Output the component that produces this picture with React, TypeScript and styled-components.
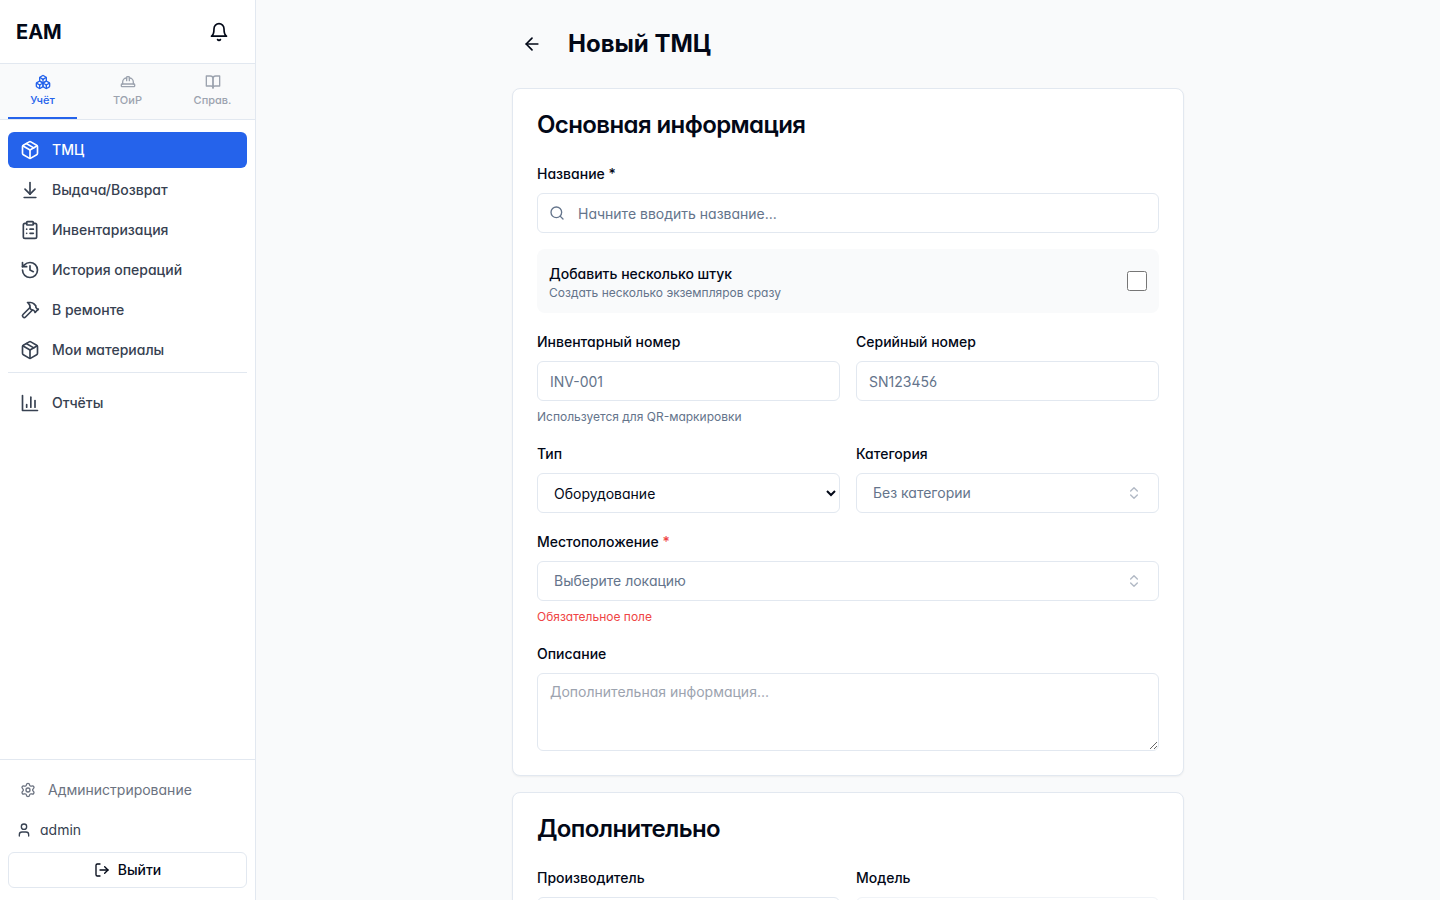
import React, { useState } from 'react';
import styled, { createGlobalStyle } from 'styled-components';
import {
  ArrowDownToLine,
  ArrowLeft,
  Boxes,
  ChevronsUpDown,
  ClipboardList,
  HardHat,
  History,
  LogOut,
  Package,
  Search,
  Settings,
  User,
} from 'lucide-react';

const color = {
  text: '#020817',
  muted: '#64748b',
  border: '#e2e8f0',
  page: '#f9fafb',
  surface: '#ffffff',
  nav: '#374151',
  navMuted: '#6b7280',
  tab: '#9ca3af',
  primary: '#2563eb',
  danger: '#ef4444',
};

const GlobalStyle = createGlobalStyle`
  *, *::before, *::after { box-sizing: border-box; }
  body {
    margin: 0;
    font-family: Inter, "Noto Sans", sans-serif;
    font-feature-settings: "cv02", "cv03", "cv04", "cv11";
    font-size: 16px;
    line-height: 24px;
    color: ${color.text};
    background: ${color.page};
  }
  button, input, select, textarea {
    font: inherit;
    font-feature-settings: inherit;
    color: inherit;
    margin: 0;
  }
  h1, h2, p { margin: 0; }
`;

type IconProps = { size?: number };

const StrokeIcon = ({ size = 20, children }: IconProps & { children: React.ReactNode }) => (
  <svg
    width={size}
    height={size}
    viewBox="0 0 24 24"
    fill="none"
    stroke="currentColor"
    strokeWidth="2"
    strokeLinecap="round"
    strokeLinejoin="round"
    aria-hidden="true"
  >
    {children}
  </svg>
);

const BellIcon = (p: IconProps) => (
  <StrokeIcon {...p}>
    <path d="M6 8a6 6 0 0 1 12 0c0 7 3 9 3 9H3s3-2 3-9" />
    <path d="M10.3 21a1.94 1.94 0 0 0 3.4 0" />
  </StrokeIcon>
);

const BookIcon = (p: IconProps) => (
  <StrokeIcon {...p}>
    <path d="M2 3h6a4 4 0 0 1 4 4v14a3 3 0 0 0-3-3H2z" />
    <path d="M22 3h-6a4 4 0 0 0-4 4v14a3 3 0 0 1 3-3h7z" />
  </StrokeIcon>
);

const HammerIcon = (p: IconProps) => (
  <StrokeIcon {...p}>
    <path d="m15 12-8.373 8.373a1 1 0 1 1-3-3L12 9" />
    <path d="m18 15 4-4" />
    <path d="m21.5 11.5-1.914-1.914A2 2 0 0 1 19 8.172V7l-2.26-2.26a6 6 0 0 0-4.202-1.756L9 2.96l.92.82A6.18 6.18 0 0 1 12 8.4V10l2 2h1.172a2 2 0 0 1 1.414.586L18.5 14.5" />
  </StrokeIcon>
);

const ChartIcon = (p: IconProps) => (
  <StrokeIcon {...p}>
    <path d="M3 3v18h18" />
    <path d="M18 17V9" />
    <path d="M13 17V5" />
    <path d="M8 17v-3" />
  </StrokeIcon>
);

const Layout = styled.div`
  display: flex;
  height: 100vh;
`;

const Sidebar = styled.aside`
  display: flex;
  flex-direction: column;
  flex: 0 0 256px;
  background: ${color.surface};
  border-right: 1px solid ${color.border};
`;

const Brand = styled.div`
  display: flex;
  align-items: center;
  justify-content: space-between;
  height: 64px;
  padding: 0 16px;
  border-bottom: 1px solid ${color.border};
`;

const BrandName = styled.span`
  font-size: 20px;
  line-height: 28px;
  font-weight: 700;
`;

const IconButton = styled.button`
  display: inline-flex;
  align-items: center;
  justify-content: center;
  width: 40px;
  height: 40px;
  padding: 0;
  border: 0;
  border-radius: 6px;
  background: transparent;
  cursor: pointer;
`;

const Tabs = styled.div`
  display: flex;
  height: 56px;
  background: ${color.page};
  border-bottom: 1px solid ${color.border};
`;

const Tab = styled.button<{ $active?: boolean }>`
  position: relative;
  flex: 1;
  display: flex;
  flex-direction: column;
  align-items: center;
  gap: 2px;
  padding: 10px 4px;
  border: 0;
  background: transparent;
  color: ${(p) => (p.$active ? color.primary : color.tab)};
  font-size: 11px;
  line-height: 16px;
  font-weight: 500;
  cursor: pointer;

  &::after {
    content: '';
    position: absolute;
    left: 8px;
    right: 8px;
    bottom: 0;
    height: 2px;
    background: ${(p) => (p.$active ? color.primary : 'transparent')};
  }
`;

const Nav = styled.nav`
  display: flex;
  flex-direction: column;
  flex: 1;
  gap: 4px;
  padding: 12px 8px;
`;

const NavLink = styled.a<{ $active?: boolean; $quiet?: boolean }>`
  display: flex;
  align-items: center;
  gap: 12px;
  padding: 8px 12px;
  border-radius: 6px;
  font-size: 14px;
  line-height: 20px;
  font-weight: ${(p) => (p.$quiet ? 400 : 500)};
  text-decoration: none;
  color: ${(p) => (p.$active ? '#ffffff' : p.$quiet ? color.navMuted : color.nav)};
  background: ${(p) => (p.$active ? color.primary : 'transparent')};
`;

const NavGroup = styled.div`
  padding-top: 12px;
  border-top: 1px solid ${color.border};
`;

const SidebarFooter = styled.div`
  display: flex;
  flex-direction: column;
  gap: 4px;
  padding: 12px 8px;
  border-top: 1px solid ${color.border};
`;

const Account = styled.div`
  display: flex;
  align-items: center;
  gap: 8px;
  padding: 8px;
  font-size: 14px;
  line-height: 20px;
  color: ${color.nav};
`;

const LogoutButton = styled.button`
  display: flex;
  align-items: center;
  justify-content: center;
  gap: 8px;
  height: 36px;
  border: 1px solid ${color.border};
  border-radius: 6px;
  background: ${color.surface};
  font-size: 14px;
  line-height: 20px;
  font-weight: 500;
  cursor: pointer;
`;

const Main = styled.main`
  flex: 1;
  min-width: 0;
  padding: 24px;
  overflow-y: auto;
  scrollbar-width: none;
`;

const Content = styled.div`
  max-width: 672px;
  margin: 0 auto;
`;

const PageHeader = styled.header`
  display: flex;
  align-items: center;
  gap: 16px;
  margin-bottom: 24px;
`;

const PageTitle = styled.h1`
  font-size: 24px;
  line-height: 32px;
  font-weight: 700;
`;

const Form = styled.form`
  display: flex;
  flex-direction: column;
  gap: 16px;
`;

const Card = styled.section`
  padding: 24px;
  background: ${color.surface};
  border: 1px solid ${color.border};
  border-radius: 8px;
  box-shadow: 0 1px 2px rgba(0, 0, 0, 0.05);
`;

const CardTitle = styled.h2`
  margin-bottom: 24px;
  font-size: 24px;
  line-height: 24px;
  font-weight: 600;
  letter-spacing: -0.025em;
`;

const Fields = styled.div`
  display: flex;
  flex-direction: column;
  gap: 16px;
`;

const Row = styled.div`
  display: grid;
  grid-template-columns: 1fr 1fr;
  align-items: start;
  gap: 16px;
`;

const Field = styled.div`
  display: flex;
  flex-direction: column;
  gap: 8px;
  min-width: 0;
`;

/* The label sits on the 16px/24px baseline of the line around it. */
const LabelLine = styled.div`
  font-size: 16px;
  line-height: 24px;
`;

const LabelText = styled.label`
  font-size: 14px;
  line-height: 14px;
  font-weight: 500;
`;

const Label = ({ htmlFor, children }: { htmlFor: string; children: React.ReactNode }) => (
  <LabelLine>
    <LabelText htmlFor={htmlFor}>{children}</LabelText>
  </LabelLine>
);

const Required = styled.span`
  color: ${color.danger};
`;

const Hint = styled.p<{ $error?: boolean }>`
  font-size: 12px;
  line-height: 16px;
  color: ${(p) => (p.$error ? color.danger : color.muted)};
`;

const TextInput = styled.input<{ $withIcon?: boolean }>`
  width: 100%;
  height: 40px;
  padding: 8px 12px 8px ${(p) => (p.$withIcon ? '40px' : '12px')};
  border: 1px solid ${color.border};
  border-radius: 6px;
  background: ${color.surface};
  font-size: 14px;
  line-height: 20px;

  &::placeholder { color: ${color.muted}; }
  &:disabled { opacity: 0.5; }
`;

const SearchBox = styled.div`
  position: relative;

  svg {
    position: absolute;
    left: 12px;
    top: 12px;
    color: ${color.muted};
  }
`;

const Select = styled.select`
  width: 100%;
  height: 40px;
  padding: 8px 12px;
  border: 1px solid ${color.border};
  border-radius: 6px;
  background: ${color.surface};
  font-size: 14px;
  line-height: 20px;
`;

const PickerButton = styled.button`
  display: flex;
  align-items: center;
  justify-content: space-between;
  width: 100%;
  height: 40px;
  padding: 8px 16px;
  border: 1px solid ${color.border};
  border-radius: 6px;
  background: ${color.surface};
  color: ${color.muted};
  font-size: 14px;
  line-height: 20px;
  cursor: pointer;

  svg { opacity: 0.5; }
`;

const TextArea = styled.textarea`
  display: block;
  width: 100%;
  padding: 8px 12px;
  border: 1px solid ${color.border};
  border-radius: 6px;
  background: ${color.surface};
  font-size: 14px;
  line-height: 20px;
  resize: vertical;

  &::placeholder { color: ${color.tab}; }
`;

const OptionPanel = styled.div`
  display: flex;
  align-items: center;
  justify-content: space-between;
  padding: 12px;
  border-radius: 8px;
  background: ${color.page};
`;

const OptionText = styled.div`
  display: flex;
  flex-direction: column;
`;

const Checkbox = styled.input`
  width: 20px;
  height: 20px;
`;

const navItems = [
  { label: 'ТМЦ', icon: <Package size={20} /> },
  { label: 'Выдача/Возврат', icon: <ArrowDownToLine size={20} /> },
  { label: 'Инвентаризация', icon: <ClipboardList size={20} /> },
  { label: 'История операций', icon: <History size={20} /> },
  { label: 'В ремонте', icon: <HammerIcon /> },
  { label: 'Мои материалы', icon: <Package size={20} /> },
];

const tabs = [
  { label: 'Учёт', icon: <Boxes size={16} /> },
  { label: 'ТОиР', icon: <HardHat size={16} /> },
  { label: 'Справ.', icon: <BookIcon size={16} /> },
];

export default function App() {
  const [tab, setTab] = useState(0);

  return (
    <>
      <GlobalStyle />
      <Layout>
        <Sidebar>
          <Brand>
            <BrandName>EAM</BrandName>
            <IconButton type="button">
              <BellIcon />
            </IconButton>
          </Brand>
          <Tabs>
            {tabs.map((t, i) => (
              <Tab key={t.label} type="button" $active={i === tab} onClick={() => setTab(i)}>
                {t.icon}
                {t.label}
              </Tab>
            ))}
          </Tabs>
          <Nav>
            {navItems.map((item, i) => (
              <NavLink key={item.label} href="#" $active={i === 0}>
                {item.icon}
                {item.label}
              </NavLink>
            ))}
            <NavGroup>
              <NavLink href="#">
                <ChartIcon />
                Отчёты
              </NavLink>
            </NavGroup>
          </Nav>
          <SidebarFooter>
            <NavLink href="#" $quiet>
              <Settings size={16} />
              Администрирование
            </NavLink>
            <Account>
              <User size={16} />
              admin
            </Account>
            <LogoutButton type="button">
              <LogOut size={16} />
              Выйти
            </LogoutButton>
          </SidebarFooter>
        </Sidebar>

        <Main>
          <Content>
            <PageHeader>
              <IconButton type="button">
                <ArrowLeft size={20} />
              </IconButton>
              <PageTitle>Новый ТМЦ</PageTitle>
            </PageHeader>
            <Form onSubmit={(e) => e.preventDefault()}>
              <Card>
                <CardTitle>Основная информация</CardTitle>
                <Fields>
                  <Field>
                    <Label htmlFor="name">Название *</Label>
                    <SearchBox>
                      <Search size={16} />
                      <TextInput id="name" $withIcon placeholder="Начните вводить название..." />
                    </SearchBox>
                  </Field>
                  <OptionPanel>
                    <OptionText>
                      <Label htmlFor="bulk">Добавить несколько штук</Label>
                      <Hint>Создать несколько экземпляров сразу</Hint>
                    </OptionText>
                    <Checkbox id="bulk" type="checkbox" />
                  </OptionPanel>
                  <Row>
                    <Field>
                      <Label htmlFor="inventory">Инвентарный номер</Label>
                      <TextInput id="inventory" placeholder="INV-001" />
                      <Hint>Используется для QR-маркировки</Hint>
                    </Field>
                    <Field>
                      <Label htmlFor="serial">Серийный номер</Label>
                      <TextInput id="serial" placeholder="SN123456" />
                    </Field>
                  </Row>
                  <Row>
                    <Field>
                      <Label htmlFor="type">Тип</Label>
                      <Select id="type">
                        <option>Оборудование</option>
                      </Select>
                    </Field>
                    <Field>
                      <Label htmlFor="category">Категория</Label>
                      <PickerButton id="category" type="button">
                        Без категории
                        <ChevronsUpDown size={16} />
                      </PickerButton>
                    </Field>
                  </Row>
                  <Field>
                    <Label htmlFor="location">
                      Местоположение <Required>*</Required>
                    </Label>
                    <PickerButton id="location" type="button">
                      Выберите локацию
                      <ChevronsUpDown size={16} />
                    </PickerButton>
                    <Hint $error>Обязательное поле</Hint>
                  </Field>
                  <Field>
                    <Label htmlFor="description">Описание</Label>
                    <TextArea id="description" rows={3} placeholder="Дополнительная информация..." />
                  </Field>
                </Fields>
              </Card>
              <Card>
                <CardTitle>Дополнительно</CardTitle>
                <Row>
                  <Field>
                    <Label htmlFor="manufacturer">Производитель</Label>
                    <TextInput id="manufacturer" />
                  </Field>
                  <Field>
                    <Label htmlFor="model">Модель</Label>
                    <TextInput id="model" disabled />
                  </Field>
                </Row>
              </Card>
            </Form>
          </Content>
        </Main>
      </Layout>
    </>
  );
}
